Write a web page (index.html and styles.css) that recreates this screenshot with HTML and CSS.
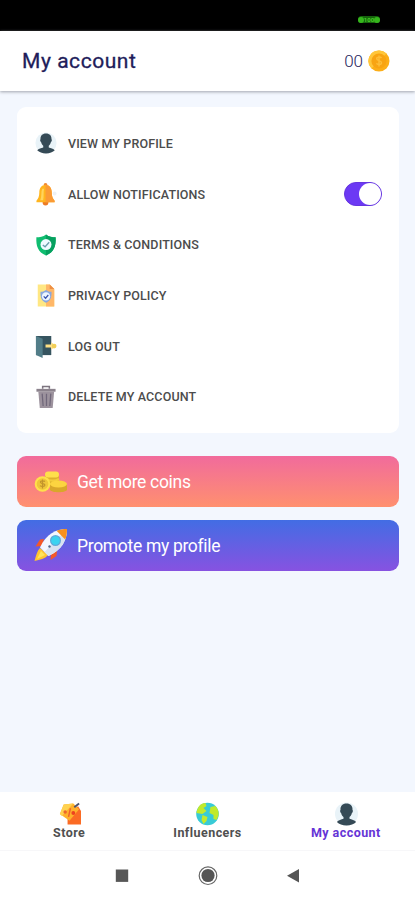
FILE: index.html
```html
<!DOCTYPE html>
<html lang="en">
<head>
<meta charset="utf-8">
<title>My account</title>
<link rel="stylesheet" href="styles.css">
</head>
<body>
<svg class="defs" width="0" height="0" aria-hidden="true">
  <symbol id="user" viewBox="0 0 24 24">
    <circle cx="12" cy="12" r="11.5" fill="#e9f3f8"/>
    <path fill="#354a56" d="M12 1.500c-4 0-6.300 2.500-6 6.500-.8.4-.3 2.600.7 3.200.4 1.700 1.100 2.800 2.300 3.800v1.800c-2 1-5.200 1-6.600 3.200C4.500 22.200 8 23.500 12 23.500s7.500-1.300 9.600-3.500c-1.400-2.200-4.600-2.200-6.600-3.200V15c1.200-1 1.900-2.100 2.300-3.800 1-.6 1.500-2.800.7-3.200.3-4-2-6.500-6-6.500z"/>
  </symbol>
</svg>
<div class="status"><span class="battery"><i></i><b>100</b><i></i></span></div>
<header class="header">
  <h1>My account</h1>
  <div class="balance"><span>00</span>
    <svg width="22" height="22" viewBox="0 0 22 22"><circle cx="11" cy="11" r="10.500" fill="#fcae18"/><path d="M11 .5a10.500 10.500 0 0 0-7.500 18L18.500 3.500A10.500 10.500 0 0 0 11 .5z" fill="#ffc63a"/><circle cx="11" cy="11" r="7.600" fill="#f8a413"/><path d="M13.500 8c-1-1.300-5-1.300-4.800.8.2 2.200 4.800 1.400 4.800 3.900 0 2.100-4 2.200-5.100.6M11 5.500v11" fill="none" stroke="#fdbd38" stroke-width="1.500"/></svg>
  </div>
</header>
<main class="content">
  <ul class="card">
    <li><svg width="22" height="24"><use href="#user"/></svg><span>VIEW MY PROFILE</span></li>
    <li><svg width="22" height="24" viewBox="0 0 23 25"><circle cx="20.500" cy="12" r="2" fill="#edf1f5"/><circle cx="11" cy="3" r="2" fill="#f28a31"/><circle cx="11" cy="21.500" r="3" fill="#ed7b25"/><path d="M11 3C6.500 3 4.500 6.500 4.500 11c0 4-1 6.500-3 8.500V21h19v-1.500c-2-2-3-4.500-3-8.500 0-4.500-2-8-6.500-8z" fill="#ffb51f"/><path d="M11 3v18h9.500v-1.500c-2-2-3-4.500-3-8.500 0-4.500-2-8-6.500-8z" fill="#fb9a35"/><path d="M7.500 7c-1.500 4-.2 8-2 12h3c1-4 0-8 1-12z" fill="#ffd45c"/></svg><span>ALLOW NOTIFICATIONS</span><i class="toggle"></i></li>
    <li><svg width="22" height="24" viewBox="0 0 24 26"><path d="M12 1.500C9 4 5 4.500 1.500 4.500 1 14 3 20.500 12 24.500c9-4 11-10.500 10.500-20C19 4.500 15 4 12 1.500z" fill="#10bd70"/><path d="M12 1.500v23c9-4 11-10.500 10.500-20C19 4.500 15 4 12 1.500z" fill="#06a05f"/><circle cx="12" cy="12.500" r="6" fill="#f0faff"/><path d="m8.500 13 2.500 2 4.500-5" fill="none" stroke="#6d9fae" stroke-width="1.500"/></svg><span>TERMS &amp; CONDITIONS</span></li>
    <li><svg width="22" height="25" viewBox="0 0 24 26"><path d="M3 1h13l5 5v19H3z" fill="#ffe783"/><path d="M12 1h4l5 5v19h-9z" fill="#ffb768"/><path d="M16 1v5h5z" fill="#ed8f45"/><path d="M12 7c-2 1.500-4 2-6 2-.3 6 1 10 6 12 5-2 6.300-6 6-12-2 0-4-.5-6-2z" fill="#89a8e0"/><circle cx="12" cy="14" r="4.500" fill="#edf5ff"/><path d="m9.500 14 2 2 3-3.500" fill="none" stroke="#3853b0" stroke-width="1.400"/></svg><span>PRIVACY POLICY</span></li>
    <li><svg width="22" height="25" viewBox="0 0 23 26"><path d="M1 2h16v20H1z" fill="#36545f"/><path d="m1 2 7 3v20l-7-3z" fill="#527d88"/><path d="M11 11h6V8.500l5 4-5 4V14h-6z" fill="#ffe084"/><circle cx="20" cy="12.500" r="2.500" fill="#f2cf57"/></svg><span>LOG OUT</span></li>
    <li><svg width="22" height="25" viewBox="0 0 23 26"><path d="M8 5V2.500h7V5" fill="none" stroke="#7d7580" stroke-width="1.600"/><path d="M1.500 5h20v3h-20z" fill="#8b828c"/><path d="M3.500 8h16.500l-1.500 17H5z" fill="#9c929d"/><path d="m7.500 10 1 13M12 10v13M16.500 10l-1 13" stroke="#70677a" stroke-width="1.300"/></svg><span>DELETE MY ACCOUNT</span></li>
  </ul>
  <a class="promo coins"><svg width="34" height="34" viewBox="0 0 34 34"><path d="M11 10v9h14v-9z" fill="#deb12e"/><rect x="11" y="6.500" width="14" height="6" rx="3" fill="#ffe04b"/><path d="M12 14c4 2 9 2 13 0" fill="none" stroke="#f4cc3d" stroke-width="2"/><path d="M16 19v6c2 3 15 3 17 0v-6z" fill="#d9a72a"/><ellipse cx="24.500" cy="19" rx="8.500" ry="3.500" fill="#fcd440"/><circle cx="8.500" cy="19" r="7.800" fill="#ffe04b"/><circle cx="8.500" cy="19" r="5.800" fill="#efc53a"/><path d="M11 16.500c-1-1-5-1-4.500.8.4 1.700 4.400.8 4.400 2.800 0 1.800-3.700 1.600-4.900.5M8.500 14.500v9" fill="none" stroke="#c2942b" stroke-width="1.200"/></svg><span>Get more coins</span></a>
  <a class="promo rocket"><svg width="34" height="34" viewBox="0 0 34 34"><path d="m10 11-4 .5-4.500 7 6.500-.5zM23 23l-.5 5-6 4 .5-7z" fill="#f45827"/><path d="M6 20c-3 3-4 8-5.500 13C6 31.500 11 31 14 27z" fill="#ffc42f"/><path d="m7 23-4 8 8-4z" fill="#ffe35b"/><path d="M33 1C22 1 12 6 6 19.500l8.500 8.500C28 22 33 12 33 1z" fill="#f3f7ff"/><path d="M33 1 10.500 24l4 4C28 22 33 12 33 1z" fill="#d8e2f1"/><path d="M33 1c-4 0-7.500.6-10.500 1.800l8.700 8.700C32.500 8.500 33 5 33 1z" fill="#f8901d"/><circle cx="21.500" cy="12.500" r="5.500" fill="#62a9d8"/><circle cx="21.500" cy="12.500" r="4.300" fill="#3bd3f0"/><circle cx="15.500" cy="18.500" r="1.200" fill="#526586"/></svg><span>Promote my profile</span></a>
</main>
<nav class="tabs">
  <a><svg width="24" height="24" viewBox="-2 0 25 24"><path d="M9 10 20 4l3 5v14H9z" fill="#fb6b24"/><path d="M5 2 15 1l6 6-10 12-10-7z" fill="#ffb02c"/><path d="M5 2 15 1 3 14l-2-2z" fill="#ffd250"/><path d="m16 5 5-4" stroke="#4d526f" stroke-width="2"/><circle cx="6.500" cy="10" r="1.800" fill="#ec662b"/><circle cx="15" cy="11" r="2" fill="#ed4320"/><path d="m12 6-2 9" stroke="#f1602c" stroke-width="1.500"/></svg><span>Store</span></a>
  <a><svg width="24" height="24" viewBox="-.5 0 24 24"><circle cx="12" cy="12" r="11.300" fill="#38cbd6"/><path d="M3 5c2-3 4-4 7-4l1 3-3 2 3 3-4 3-6-1c0-2 1-4 2-6zM7 13l5 2-1 4-3 3-2-4zM15 5l5-1c4 5 4 9 1 14l-3-1v-4l-4-2z" fill="#c1ea2b"/></svg><span>Influencers</span></a>
  <a class="active"><svg width="24" height="24" viewBox="-.5 0 24 24"><use href="#user" width="24" height="24"/></svg><span>My account</span></a>
</nav>
<footer class="system">
  <svg width="14" height="14" viewBox="0 0 14 14"><path d="M.8.500h12.400v12.400H.8z" fill="#575757"/></svg>
  <svg width="20" height="20" viewBox="0 0 20 20"><circle cx="10" cy="9.500" r="6.600" fill="#555"/><circle cx="10" cy="9.700" r="8.800" fill="none" stroke="#666" stroke-width="1.200"/></svg>
  <svg width="14" height="14" viewBox="0 0 14 14"><path d="M13 0v13.500L1 6.700z" fill="#555"/></svg>
</footer>
</body>
</html>
```
FILE: styles.css
```css
* { box-sizing: border-box; }
body {
  margin: 0;
  width: 415px;
  height: 900px;
  display: flex;
  flex-direction: column;
  overflow: hidden;
  background: #f3f7fe;
  font-family: Roboto, sans-serif;
}
.defs { position: absolute; }
svg { display: block; flex: none; }
.status {
  height: 31px;
  flex: none;
  background: #000;
  display: flex;
  justify-content: flex-end;
  padding: 16px 35px 0 0;
}
.battery {
  width: 22px;
  height: 7px;
  border-radius: 4px;
  background: #16640c;
  display: flex;
  justify-content: space-between;
  align-items: center;
}
.battery i { width: 6px; height: 6px; border-radius: 50%; background: #36b51d; }
.battery b { font-size: 6px; line-height: 7px; color: #48cf27; }
.header {
  height: 60px;
  flex: none;
  background: #fff;
  box-shadow: 0 1px 3px #a0a4ad;
  display: flex;
  align-items: center;
  justify-content: space-between;
  padding: 0 25px 0 22px;
}
h1 {
  margin: 0;
  font-size: 21px;
  line-height: 24px;
  font-weight: 400;
  letter-spacing: .55px;
  color: #211c5a;
  -webkit-text-stroke: .3px #211c5a;
}
.balance {
  display: flex;
  align-items: center;
  gap: 5px;
  font-size: 17px;
  font-weight: 300;
  color: #26235c;
}
.content {
  flex: 1;
  padding: 16px 16px 0 17px;
}
.card {
  list-style: none;
  margin: 0 0 23px;
  height: 326px;
  padding: 11px 17px 11px 18px;
  border-radius: 9px;
  background: #fff;
}
.card li {
  height: 50.7px;
  display: flex;
  align-items: center;
  gap: 11px;
  font-size: 12.5px;
  font-weight: 500;
  letter-spacing: .13px;
  color: #4c4c4c;
}
.toggle {
  width: 38px;
  height: 24px;
  margin-left: auto;
  border: 1px solid #6535df;
  border-radius: 12px;
  background: #6c39f4;
  display: flex;
  justify-content: flex-end;
}
.toggle::after {
  content: "";
  width: 22px;
  height: 22px;
  border-radius: 50%;
  background: #fff;
}
.promo {
  height: 51px;
  margin-bottom: 12.5px;
  border-radius: 9px;
  display: flex;
  align-items: center;
  gap: 9px;
  padding-left: 17px;
  font-size: 17.5px;
  letter-spacing: -.32px;
  color: #fff;
}
.promo span { padding-top: 1px; }
.coins { background: linear-gradient(#f16b9c, #ff906f); }
.rocket { background: linear-gradient(#426de4, #8752e1); }
.tabs {
  height: 58px;
  flex: none;
  background: #fff;
  display: grid;
  grid-template-columns: repeat(3, 1fr);
  padding-top: 10px;
}
.tabs a {
  display: flex;
  flex-direction: column;
  align-items: center;
  font-size: 12.5px;
  line-height: 14px;
  font-weight: 700;
  letter-spacing: .45px;
  color: #505050;
}
.tabs .active { color: #6534d6; }
.system {
  height: 50px;
  flex: none;
  background: #fff;
  border-top: 1px solid #f7f7f9;
  display: flex;
  align-items: center;
  justify-content: space-between;
  padding: 0 115px;
}
```
